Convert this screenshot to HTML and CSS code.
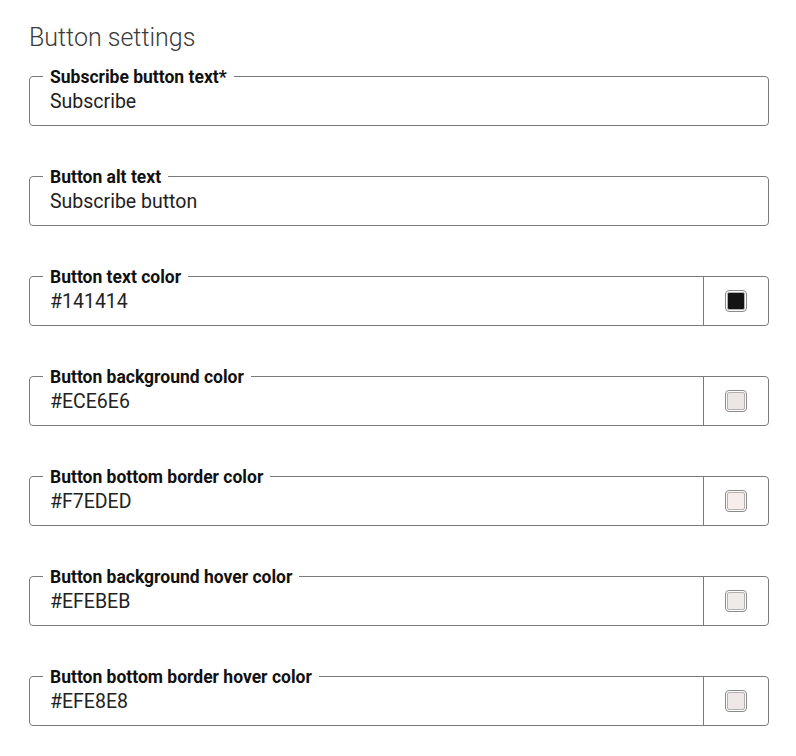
FILE: index.html
```html
<!DOCTYPE html>
<html lang="en">
<head>
  <meta charset="UTF-8" />
  <meta name="viewport" content="width=device-width, initial-scale=1.0"/>
  <title>Button settings</title>
  <link rel="stylesheet" href="styles.css">
</head>
<body>
  <div class="settings">
    <h2>Button settings</h2>

    <div class="fields">
      <div class="field">
        <label class="field-label">Subscribe button text*</label>
        <div class="field-value">Subscribe</div>
      </div>

      <div class="field">
        <label class="field-label">Button alt text</label>
        <div class="field-value">Subscribe button</div>
      </div>

      <div class="field">
        <label class="field-label">Button text color</label>
        <div class="field-value">#141414</div>
        <div class="swatch-cell"><span class="swatch"><span class="swatch-fill" style="background:#141414"></span></span></div>
      </div>

      <div class="field">
        <label class="field-label">Button background color</label>
        <div class="field-value">#ECE6E6</div>
        <div class="swatch-cell"><span class="swatch"><span class="swatch-fill" style="background:#ECE6E6"></span></span></div>
      </div>

      <div class="field">
        <label class="field-label">Button bottom border color</label>
        <div class="field-value">#F7EDED</div>
        <div class="swatch-cell"><span class="swatch"><span class="swatch-fill" style="background:#F7EDED"></span></span></div>
      </div>

      <div class="field">
        <label class="field-label">Button background hover color</label>
        <div class="field-value">#EFEBEB</div>
        <div class="swatch-cell"><span class="swatch"><span class="swatch-fill" style="background:#EFEBEB"></span></span></div>
      </div>

      <div class="field">
        <label class="field-label">Button bottom border hover color</label>
        <div class="field-value">#EFE8E8</div>
        <div class="swatch-cell"><span class="swatch"><span class="swatch-fill" style="background:#EFE8E8"></span></span></div>
      </div>
    </div>
  </div>
</body>
</html>
```

FILE: styles.css
```css
body {
  margin: 0;
  padding: 0;
  font-family: Roboto, 'Liberation Sans', sans-serif;
  background: #fff;
  color: #1a1a1a;
}

.settings {
  width: 740px;
  padding: 23px 0 0 29px;
}

.settings h2 {
  margin: 0 0 23px 0;
  font-size: 25px;
  font-weight: 300;
  color: #3a3a3a;
  line-height: 30px;
}

.fields {
  display: flex;
  flex-direction: column;
  gap: 50px;
}

.field {
  position: relative;
  display: flex;
  height: 48px;
  border: 1px solid #7a7a7a;
  border-radius: 4px;
}

.field-label {
  position: absolute;
  top: -9px;
  left: 13px;
  padding: 0 7px;
  background: #fff;
  font-size: 17.5px;
  font-weight: 700;
  line-height: 18px;
  color: #111;
}

.field-value {
  flex: 1;
  display: flex;
  align-items: center;
  padding: 0 0 0 20px;
  font-size: 19.5px;
  color: #222;
}

.swatch-cell {
  width: 64px;
  border-left: 1px solid #7a7a7a;
  display: flex;
  align-items: center;
  justify-content: center;
}

.swatch {
  width: 18px;
  height: 18px;
  padding: 1px;
  border: 1.5px solid #8a8a8a;
  border-radius: 4px;
  background: #fff;
  display: flex;
}

.swatch-fill {
  flex: 1;
  border: 1px solid #b5b0b0;
  border-radius: 2px;
}
```
